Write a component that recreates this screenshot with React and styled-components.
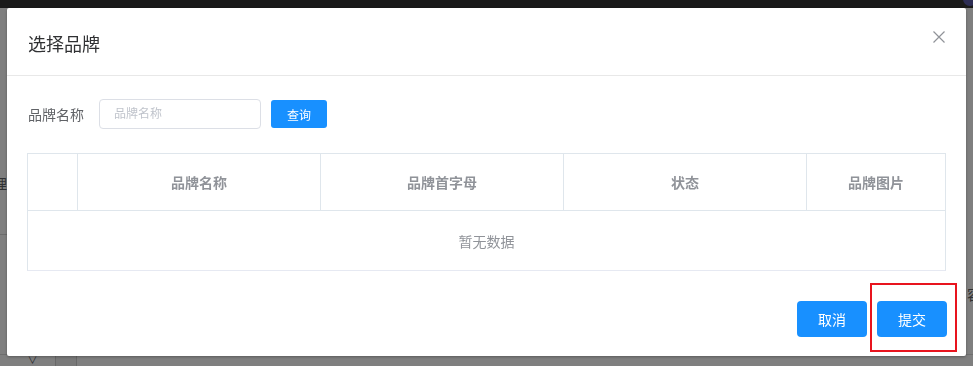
import React from 'react'
import styled, { createGlobalStyle } from 'styled-components'

const GlobalStyle = createGlobalStyle`
  * { box-sizing: border-box; }
  html, body {
    margin: 0;
    padding: 0;
    width: 973px;
    height: 366px;
    overflow: hidden;
    font-family: "Liberation Sans", "Noto Sans CJK SC", sans-serif;
    background: #fff;
  }
`

const columns = [
  { key: 'sel', title: '', width: 49 },
  { key: 'name', title: '品牌名称', width: 243 },
  { key: 'letter', title: '品牌首字母', width: 243 },
  { key: 'status', title: '状态', width: 243 },
  { key: 'pic', title: '品牌图片', width: 140 }
]

const BrandDialog = () => {
  return (
    <>
      <GlobalStyle />
      <PageBehind>
        <TopNav>
          <Avatar />
        </TopNav>
        <BehindBody>
          <BehindLabel>管理</BehindLabel>
          <BehindRule />
          <BehindSide>容</BehindSide>
          <BehindFoot>
            <span className='chev'>∨</span>
            <span className='cell dark' />
            <span className='cell' />
          </BehindFoot>
        </BehindBody>
      </PageBehind>
      <Overlay />
      <Dialog>
        <Header>
          <Title>选择品牌</Title>
          <CloseBtn aria-label='close'>
            <svg width='12' height='12' viewBox='0 0 12 12'>
              <path d='M0.5 0.5 L11.5 11.5 M11.5 0.5 L0.5 11.5' stroke='#909399' strokeWidth='1.2' fill='none' />
            </svg>
          </CloseBtn>
        </Header>
        <Body>
          <SearchRow>
            <FieldLabel>品牌名称</FieldLabel>
            <TextInput placeholder='品牌名称' />
            <Button $size='small'>查询</Button>
          </SearchRow>
          <Table>
            <HeadRow>
              {columns.map(c => (
                <HeadCell key={c.key} $w={c.width} $fill={c.key === 'pic'}>{c.title}</HeadCell>
              ))}
            </HeadRow>
            <EmptyRow>暂无数据</EmptyRow>
          </Table>
        </Body>
        <Footer>
          <Button $size='large'>取消</Button>
          <Marked>
            <Button $size='large'>提交</Button>
          </Marked>
        </Footer>
      </Dialog>
    </>
  )
}

const PageBehind = styled.div`
  width: 973px;
  height: 366px;
  display: flex;
  flex-direction: column;
`

const TopNav = styled.div`
  height: 8px;
  background: #343434;
  position: relative;
  overflow: hidden;
`

const Avatar = styled.span`
  position: absolute;
  right: -4px;
  top: -8px;
  width: 14px;
  height: 14px;
  border-radius: 50%;
  background: #5a5aa8;
`

const BehindBody = styled.div`
  flex: 1;
  position: relative;
`

const BehindLabel = styled.span`
  position: absolute;
  left: -21px;
  top: 165px;
  font-size: 14px;
  color: #606266;
`

const BehindRule = styled.div`
  position: absolute;
  left: 0;
  top: 226px;
  width: 20px;
  border-top: 1px solid #d8d8d8;
`

const BehindSide = styled.span`
  position: absolute;
  right: -8px;
  top: 276px;
  font-size: 14px;
  color: #606266;
`

const BehindFoot = styled.div`
  position: absolute;
  left: 0;
  right: 0;
  bottom: 0;
  height: 12px;
  display: flex;
  border-top: 1px solid #dcdcdc;
  .chev {
    width: 55px;
    text-align: center;
    font-size: 10px;
    color: #606266;
    line-height: 12px;
    padding-left: 10px;
  }
  .cell {
    width: 151px;
    border-left: 1px solid #d0d0d0;
  }
  .cell.dark {
    width: 21px;
    background: #f2f2f2;
  }
`

const Overlay = styled.div`
  position: fixed;
  inset: 0;
  background: rgba(0, 0, 0, 0.5);
`

const Dialog = styled.div`
  position: fixed;
  left: 7px;
  top: 8px;
  width: 959px;
  background: #fff;
  border-radius: 2px;
  box-shadow: 0 1px 3px rgba(0, 0, 0, 0.3);
  font-family: "Liberation Sans", "Noto Sans CJK SC", sans-serif;
`

const Header = styled.div`
  display: flex;
  justify-content: space-between;
  align-items: flex-start;
  padding: 25px 21px 18px 21px;
  border-bottom: 1px solid #e8e8e8;
`

const Title = styled.span`
  font-size: 18px;
  line-height: 24px;
  color: #303133;
`

const CloseBtn = styled.button`
  border: 0;
  background: none;
  padding: 0;
  margin-top: -2px;
  width: 12px;
  height: 12px;
  display: flex;
  cursor: pointer;
`

const Body = styled.div`
  padding: 23px 20px 20px;
`

const SearchRow = styled.div`
  display: flex;
  align-items: center;
  height: 30px;
  margin-bottom: 24px;
`

const FieldLabel = styled.label`
  width: 72px;
  font-size: 14px;
  color: #606266;
  padding-left: 1px;
`

const TextInput = styled.input`
  width: 162px;
  height: 30px;
  border: 1px solid #dcdfe6;
  border-radius: 4px;
  padding: 0 14px;
  font-size: 12px;
  font-family: inherit;
  color: #606266;
  outline: none;
  margin-right: 10px;
  &::placeholder { color: #c0c4cc; }
`

const Button = styled.button`
  border: 0;
  background: #1890ff;
  color: #fff;
  font-family: inherit;
  border-radius: ${p => (p.$size === 'large' ? '4px' : '3px')};
  width: ${p => (p.$size === 'large' ? '70px' : '56px')};
  height: ${p => (p.$size === 'large' ? '36px' : '28px')};
  font-size: ${p => (p.$size === 'large' ? '14px' : '12px')};
  padding: 0;
  cursor: pointer;
`

const Table = styled.div`
  border: 1px solid #dfe6ec;
  border-bottom-color: #e6e9f2;
`

const HeadRow = styled.div`
  display: flex;
  height: 57px;
  border-bottom: 1px solid #dfe6ec;
`

const HeadCell = styled.div`
  width: ${p => p.$w}px;
  flex: ${p => (p.$fill ? 1 : 'none')};
  display: flex;
  align-items: center;
  justify-content: center;
  font-size: 14px;
  font-weight: bold;
  color: #909399;
  & + & { border-left: 1px solid #dfe6ec; }
`

const EmptyRow = styled.div`
  height: 59px;
  display: flex;
  align-items: center;
  justify-content: center;
  font-size: 14px;
  color: #909399;
`

const Footer = styled.div`
  display: flex;
  justify-content: flex-end;
  gap: 10px;
  padding: 10px 19px 19px;
`

const Marked = styled.div`
  position: relative;
  display: flex;
  &::after {
    content: '';
    position: absolute;
    left: -7px;
    top: -18px;
    right: -10px;
    bottom: -15px;
    border: 2px solid #e8141e;
    pointer-events: none;
  }
`

export default BrandDialog
